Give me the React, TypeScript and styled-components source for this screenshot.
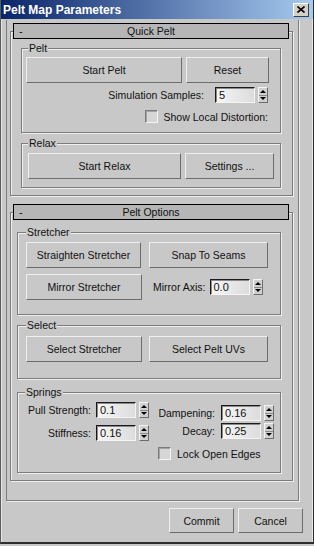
import React from "react";
import styled, { createGlobalStyle } from "styled-components";

const BG = "#c8c8c8";
const DARK = "#7c7c7c";
const LIGHT = "#efefef";

const GlobalStyle = createGlobalStyle`
  html, body { margin: 0; padding: 0; background: ${BG}; }
  body {
    font-family: "Liberation Sans", Arial, sans-serif;
    font-size: 10.5px;
    color: #111;
  }
  *, *::before, *::after { box-sizing: border-box; }
`;

const Window = styled.div`
  width: 314px;
  height: 544px;
  display: flex;
  flex-direction: column;
  background: ${BG};
  border-left: 1px solid #5c5c5c;
  border-right: 1px solid #2e2e2e;
  border-bottom: 2px solid #2e2e2e;
`;

const TitleBar = styled.div`
  flex: none;
  height: 19px;
  display: flex;
  align-items: center;
  justify-content: space-between;
  padding: 0 4px 0 2px;
  background: linear-gradient(90deg, #0a246a 0%, #a6caf0 100%);
`;

const Title = styled.span`
  font-weight: bold;
  font-size: 12px;
  color: #fff;
  white-space: nowrap;
`;

const CloseButton = styled.span`
  width: 16px;
  height: 14px;
  display: grid;
  place-items: center;
  background: #d4d0c8;
  border: 1px solid;
  border-color: #fff #404040 #404040 #fff;
`;

const Body = styled.div`
  flex: 1;
  display: flex;
  flex-direction: column;
  padding: 1px 0 0 4px;
  border-left: 1px solid #e6e6e6;
  border-right: 1px solid #e6e6e6;
`;

const Panel = styled.div`
  flex: none;
  width: 293px;
  height: 481px;
  display: flex;
  flex-direction: column;
  padding: 11px 5px 0 3px;
  border: 1px solid ${DARK};
  border-top: none;
  box-shadow: 1px 1px 0 ${LIGHT};
`;

const RolloutFrame = styled.div<{ $mt?: number }>`
  display: flex;
  flex-direction: column;
  margin-top: ${(p) => p.$mt ?? 0}px;
  padding-bottom: 7px;
  border: 1px solid ${DARK};
  box-shadow: inset 1px 1px 0 ${LIGHT}, 1px 1px 0 ${LIGHT};
`;

const RolloutHeader = styled.div`
  position: relative;
  height: 16px;
  margin: -9px 3px 0 2px;
  display: grid;
  grid-template-columns: 14px 1fr 14px;
  align-items: center;
  line-height: 14px;
  background: #b6b6b6;
  border: 1px solid #000;
`;

const Minus = styled.span`
  padding-left: 5px;
  font-size: 11px;
`;

const HeaderTitle = styled.span`
  text-align: center;
  white-space: nowrap;
`;

const Group = styled.div<{ $mt: number; $ml: number; $pl: number; $pb: number }>`
  display: flex;
  flex-direction: column;
  margin: ${(p) => p.$mt}px 11px 0 ${(p) => p.$ml}px;
  padding: 0 0 ${(p) => p.$pb}px ${(p) => p.$pl}px;
  border: 1px solid ${DARK};
  box-shadow: inset 1px 1px 0 ${LIGHT}, 1px 1px 0 ${LIGHT};
`;

const GroupLabel = styled.span<{ $ml: number; $gap: number }>`
  align-self: flex-start;
  height: 12px;
  line-height: 12px;
  margin: -7px 0 ${(p) => p.$gap}px ${(p) => p.$ml}px;
  padding: 0 1px;
  background: ${BG};
  white-space: nowrap;
`;

const Row = styled.div<{ $gap?: number; $mt?: number; $ml?: number; $end?: boolean; $pr?: number }>`
  display: flex;
  align-items: center;
  gap: ${(p) => p.$gap ?? 0}px;
  margin-top: ${(p) => p.$mt ?? 0}px;
  margin-left: ${(p) => p.$ml ?? 0}px;
  padding-right: ${(p) => p.$pr ?? 0}px;
  justify-content: ${(p) => (p.$end ? "flex-end" : "flex-start")};
`;

const Button = styled.button<{ $w: number; $h?: number }>`
  flex: none;
  width: ${(p) => p.$w}px;
  height: ${(p) => p.$h ?? 26}px;
  padding: 0;
  font: inherit;
  color: #111;
  background: ${BG};
  border: 1px solid;
  border-color: ${LIGHT} #6c6c6c #6c6c6c ${LIGHT};
  white-space: nowrap;
`;

const FieldRow = styled.div`
  display: flex;
  align-items: center;
`;

const FieldLabel = styled.span<{ $w?: number; $gap: number }>`
  ${(p) => (p.$w ? `width: ${p.$w}px;` : "")}
  margin-right: ${(p) => p.$gap}px;
  text-align: right;
  white-space: nowrap;
`;

const Field = styled.div`
  width: 40px;
  height: 16px;
  padding-left: 3px;
  line-height: 14px;
  font-size: 11px;
  color: #111;
  border-top: 1px solid #1a1a1a;
  border-left: 1px solid #1a1a1a;
  border-right: 1px solid #f4f4f4;
  border-bottom: 1px solid #f4f4f4;
  box-shadow: inset 1px 1px 0 #8a8a8a;
  background: linear-gradient(90deg, #f6f6f6, #dcdcdc);
`;

const Spinner = styled.div`
  width: 10px;
  height: 16px;
  margin-left: 3px;
  display: flex;
  flex-direction: column;
  background: #d0d0d0;
  border: 1px solid;
  border-color: #f4f4f4 #6c6c6c #6c6c6c #f4f4f4;
`;

const SpinHalf = styled.div<{ $top?: boolean }>`
  flex: 1;
  display: grid;
  place-items: center;
  ${(p) => (p.$top ? "border-bottom: 1px solid #8a8a8a;" : "")}
`;

const Arrow = styled.span<{ $up?: boolean }>`
  width: 0;
  height: 0;
  border-left: 3px solid transparent;
  border-right: 3px solid transparent;
  ${(p) => (p.$up ? "border-bottom: 3px solid #000;" : "border-top: 3px solid #000;")}
`;

const Check = styled.span`
  flex: none;
  width: 13px;
  height: 13px;
  background: #d6d6d6;
  border: 1px solid;
  border-color: #7a7a7a #f4f4f4 #f4f4f4 #7a7a7a;
  box-shadow: inset 1px 1px 0 #a4a4a4;
`;

const CheckText = styled.span`
  white-space: nowrap;
`;

const Columns = styled.div`
  display: flex;
`;

const Column = styled.div<{ $gap: number; $mt?: number; $ml?: number }>`
  display: flex;
  flex-direction: column;
  gap: ${(p) => p.$gap}px;
  margin-top: ${(p) => p.$mt ?? 0}px;
  margin-left: ${(p) => p.$ml ?? 0}px;
`;

const Footer = styled.div`
  display: flex;
  justify-content: flex-end;
  gap: 4px;
  margin-top: 7px;
  padding-right: 9px;
`;

const SpinnerField = ({
  label,
  value,
  labelWidth,
  labelGap,
}: {
  label: string;
  value: string;
  labelWidth?: number;
  labelGap: number;
}) => (
  <FieldRow>
    <FieldLabel $w={labelWidth} $gap={labelGap}>
      {label}
    </FieldLabel>
    <Field>{value}</Field>
    <Spinner>
      <SpinHalf $top>
        <Arrow $up />
      </SpinHalf>
      <SpinHalf>
        <Arrow />
      </SpinHalf>
    </Spinner>
  </FieldRow>
);

export default function App() {
  return (
    <>
      <GlobalStyle />
      <Window>
        <TitleBar>
          <Title>Pelt Map Parameters</Title>
          <CloseButton>
            <svg width="8" height="7" viewBox="0 0 8 7">
              <path d="M0.5 0.5 L7.5 6.5 M7.5 0.5 L0.5 6.5" stroke="#000" strokeWidth="1.6" />
            </svg>
          </CloseButton>
        </TitleBar>
        <Body>
          <Panel>
            <RolloutFrame>
              <RolloutHeader>
                <Minus>-</Minus>
                <HeaderTitle>Quick Pelt</HeaderTitle>
              </RolloutHeader>
              <Group $mt={9} $ml={10} $pl={4} $pb={9}>
                <GroupLabel $ml={2} $gap={3}>Pelt</GroupLabel>
                <Row $gap={4}>
                  <Button $w={156}>Start Pelt</Button>
                  <Button $w={83}>Reset</Button>
                </Row>
                <Row $mt={4} $end $pr={12}>
                  <SpinnerField label="Simulation Samples:" value="5" labelGap={11} />
                </Row>
                <Row $mt={7} $end $pr={12} $gap={6}>
                  <Check />
                  <CheckText>Show Local Distortion:</CheckText>
                </Row>
              </Group>
              <Group $mt={10} $ml={10} $pl={4} $pb={8}>
                <GroupLabel $ml={2} $gap={4}>Relax</GroupLabel>
                <Row $gap={4} $ml={2}>
                  <Button $w={153}>Start Relax</Button>
                  <Button $w={89}>Settings ...</Button>
                </Row>
              </Group>
            </RolloutFrame>

            <RolloutFrame $mt={16}>
              <RolloutHeader>
                <Minus>-</Minus>
                <HeaderTitle>Pelt Options</HeaderTitle>
              </RolloutHeader>
              <Group $mt={12} $ml={6} $pl={8} $pb={14}>
                <GroupLabel $ml={0} $gap={4}>Stretcher</GroupLabel>
                <Row $gap={8}>
                  <Button $w={115}>Straighten Stretcher</Button>
                  <Button $w={119}>Snap To Seams</Button>
                </Row>
                <Row $mt={6}>
                  <Button $w={116}>Mirror Stretcher</Button>
                  <Row $ml={11}>
                    <SpinnerField label="Mirror Axis:" value="0.0" labelGap={4} />
                  </Row>
                </Row>
              </Group>
              <Group $mt={10} $ml={6} $pl={8} $pb={16}>
                <GroupLabel $ml={0} $gap={5}>Select</GroupLabel>
                <Row $gap={7}>
                  <Button $w={116}>Select Stretcher</Button>
                  <Button $w={119}>Select Pelt UVs</Button>
                </Row>
              </Group>
              <Group $mt={13} $ml={6} $pl={8} $pb={12}>
                <GroupLabel $ml={-1} $gap={4}>Springs</GroupLabel>
                <Columns>
                  <Column $gap={7}>
                    <SpinnerField label="Pull Strength:" value="0.1" labelWidth={65} labelGap={5} />
                    <SpinnerField label="Stiffness:" value="0.16" labelWidth={65} labelGap={5} />
                  </Column>
                  <Column $gap={2} $mt={3} $ml={9}>
                    <SpinnerField label="Dampening:" value="0.16" labelWidth={57} labelGap={6} />
                    <SpinnerField label="Decay:" value="0.25" labelWidth={57} labelGap={6} />
                    <Row $mt={6} $gap={6}>
                      <Check />
                      <CheckText>Lock Open Edges</CheckText>
                    </Row>
                  </Column>
                </Columns>
              </Group>
            </RolloutFrame>
          </Panel>
          <Footer>
            <Button $w={65} $h={25}>Commit</Button>
            <Button $w={65} $h={25}>Cancel</Button>
          </Footer>
        </Body>
      </Window>
    </>
  );
}
